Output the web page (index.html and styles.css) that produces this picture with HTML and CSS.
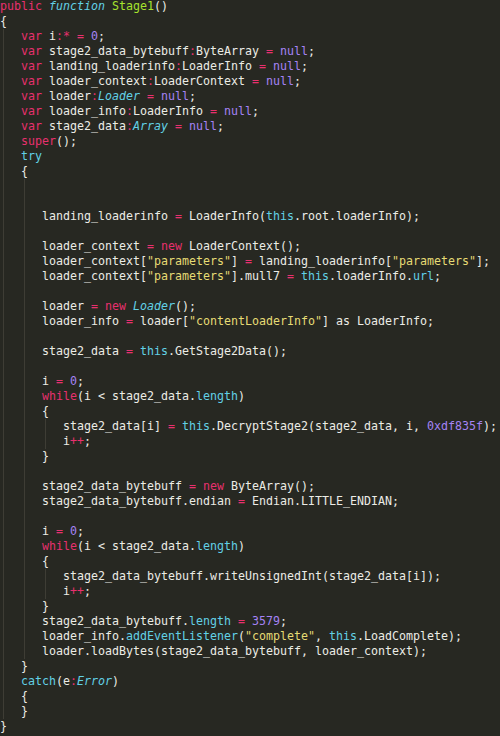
FILE: index.html
```html
<!DOCTYPE html>
<html>
<head>
<meta charset="utf-8">
<link rel="stylesheet" href="styles.css">
</head>
<body>
<div class="code">
<div class="ln"><span class="k">public</span> <span class="f">function</span> <span class="n">Stage1</span>()</div>
<div class="ln">{</div>
<div class="ln"><span class="g"></span><span class="k">var</span> i<span class="k">:*</span> <span class="k">=</span> <span class="p">0</span>;</div>
<div class="ln"><span class="g"></span><span class="k">var</span> stage2_data_bytebuff<span class="k">:</span>ByteArray <span class="k">=</span> <span class="p">null</span>;</div>
<div class="ln"><span class="g"></span><span class="k">var</span> landing_loaderinfo<span class="k">:</span>LoaderInfo <span class="k">=</span> <span class="p">null</span>;</div>
<div class="ln"><span class="g"></span><span class="k">var</span> loader_context<span class="k">:</span>LoaderContext <span class="k">=</span> <span class="p">null</span>;</div>
<div class="ln"><span class="g"></span><span class="k">var</span> loader<span class="k">:</span><span class="t">Loader</span> <span class="k">=</span> <span class="p">null</span>;</div>
<div class="ln"><span class="g"></span><span class="k">var</span> loader_info<span class="k">:</span>LoaderInfo <span class="k">=</span> <span class="p">null</span>;</div>
<div class="ln"><span class="g"></span><span class="k">var</span> stage2_data<span class="k">:</span><span class="t">Array</span> <span class="k">=</span> <span class="p">null</span>;</div>
<div class="ln"><span class="g"></span><span class="k">super</span>();</div>
<div class="ln"><span class="g"></span><span class="c">try</span></div>
<div class="ln"><span class="g"></span>{</div>
<div class="ln"><span class="g"></span><span class="g"></span></div>
<div class="ln"><span class="g"></span><span class="g"></span></div>
<div class="ln"><span class="g"></span><span class="g"></span>landing_loaderinfo <span class="k">=</span> LoaderInfo(<span class="c">this</span>.root.loaderInfo);</div>
<div class="ln"><span class="g"></span><span class="g"></span></div>
<div class="ln"><span class="g"></span><span class="g"></span>loader_context <span class="k">=</span> <span class="k">new</span> LoaderContext();</div>
<div class="ln"><span class="g"></span><span class="g"></span>loader_context[<span class="s">"parameters"</span>] <span class="k">=</span> landing_loaderinfo[<span class="s">"parameters"</span>];</div>
<div class="ln"><span class="g"></span><span class="g"></span>loader_context[<span class="s">"parameters"</span>].mull7 <span class="k">=</span> <span class="c">this</span>.loaderInfo.<span class="c">url</span>;</div>
<div class="ln"><span class="g"></span><span class="g"></span></div>
<div class="ln"><span class="g"></span><span class="g"></span>loader <span class="k">=</span> <span class="k">new</span> <span class="t">Loader</span>();</div>
<div class="ln"><span class="g"></span><span class="g"></span>loader_info <span class="k">=</span> loader[<span class="s">"contentLoaderInfo"</span>] as LoaderInfo;</div>
<div class="ln"><span class="g"></span><span class="g"></span></div>
<div class="ln"><span class="g"></span><span class="g"></span>stage2_data <span class="k">=</span> <span class="c">this</span>.GetStage2Data();</div>
<div class="ln"><span class="g"></span><span class="g"></span></div>
<div class="ln"><span class="g"></span><span class="g"></span>i <span class="k">=</span> <span class="p">0</span>;</div>
<div class="ln"><span class="g"></span><span class="g"></span><span class="k">while</span>(i &lt; stage2_data.<span class="c">length</span>)</div>
<div class="ln"><span class="g"></span><span class="g"></span>{</div>
<div class="ln"><span class="g"></span><span class="g"></span><span class="g"></span>stage2_data[i] <span class="k">=</span> <span class="c">this</span>.DecryptStage2(stage2_data, i, <span class="p">0xdf835f</span>);</div>
<div class="ln"><span class="g"></span><span class="g"></span><span class="g"></span>i<span class="k">++</span>;</div>
<div class="ln"><span class="g"></span><span class="g"></span>}</div>
<div class="ln"><span class="g"></span><span class="g"></span></div>
<div class="ln"><span class="g"></span><span class="g"></span>stage2_data_bytebuff <span class="k">=</span> <span class="k">new</span> ByteArray();</div>
<div class="ln"><span class="g"></span><span class="g"></span>stage2_data_bytebuff.endian <span class="k">=</span> Endian.LITTLE_ENDIAN;</div>
<div class="ln"><span class="g"></span><span class="g"></span></div>
<div class="ln"><span class="g"></span><span class="g"></span>i <span class="k">=</span> <span class="p">0</span>;</div>
<div class="ln"><span class="g"></span><span class="g"></span><span class="k">while</span>(i &lt; stage2_data.<span class="c">length</span>)</div>
<div class="ln"><span class="g"></span><span class="g"></span>{</div>
<div class="ln"><span class="g"></span><span class="g"></span><span class="g"></span>stage2_data_bytebuff.writeUnsignedInt(stage2_data[i]);</div>
<div class="ln"><span class="g"></span><span class="g"></span><span class="g"></span>i<span class="k">++</span>;</div>
<div class="ln"><span class="g"></span><span class="g"></span>}</div>
<div class="ln"><span class="g"></span><span class="g"></span>stage2_data_bytebuff.<span class="c">length</span> <span class="k">=</span> <span class="p">3579</span>;</div>
<div class="ln"><span class="g"></span><span class="g"></span>loader_info.<span class="c">addEventListener</span>(<span class="s">"complete"</span>, <span class="c">this</span>.LoadComplete);</div>
<div class="ln"><span class="g"></span><span class="g"></span>loader.loadBytes(stage2_data_bytebuff, loader_context);</div>
<div class="ln"><span class="g"></span>}</div>
<div class="ln"><span class="g"></span><span class="c">catch</span>(e<span class="k">:</span><span class="t">Error</span>)</div>
<div class="ln"><span class="g"></span>{</div>
<div class="ln"><span class="g"></span>}</div>
<div class="ln">}</div>
</div>
</body>
</html>
```
FILE: styles.css
```css
html, body {
  margin: 0;
  padding: 0;
  background: #272822;
}
body {
  width: 500px;
  height: 736px;
  overflow: hidden;
}
.code {
  margin-top: -1px;
  font-family: "DejaVu Sans Mono", "Liberation Mono", monospace;
  font-size: 11.63px;
  line-height: 15px;
  color: #ecece6;
}
.ln {
  height: 15px;
  white-space: pre;
}
.g {
  display: inline-block;
  width: 21px;
  height: 15px;
  vertical-align: top;
  background: linear-gradient(#3e3d35, #3e3d35) no-repeat 3px 0 / 1px 100%;
}
.k { color: #e8306e; }
.f { color: #62d1e6; font-style: italic; }
.t { color: #62d1e6; font-style: italic; }
.c { color: #62d1e6; }
.n { color: #a6e22e; }
.p { color: #a583f5; }
.s { color: #e6db74; }
```
